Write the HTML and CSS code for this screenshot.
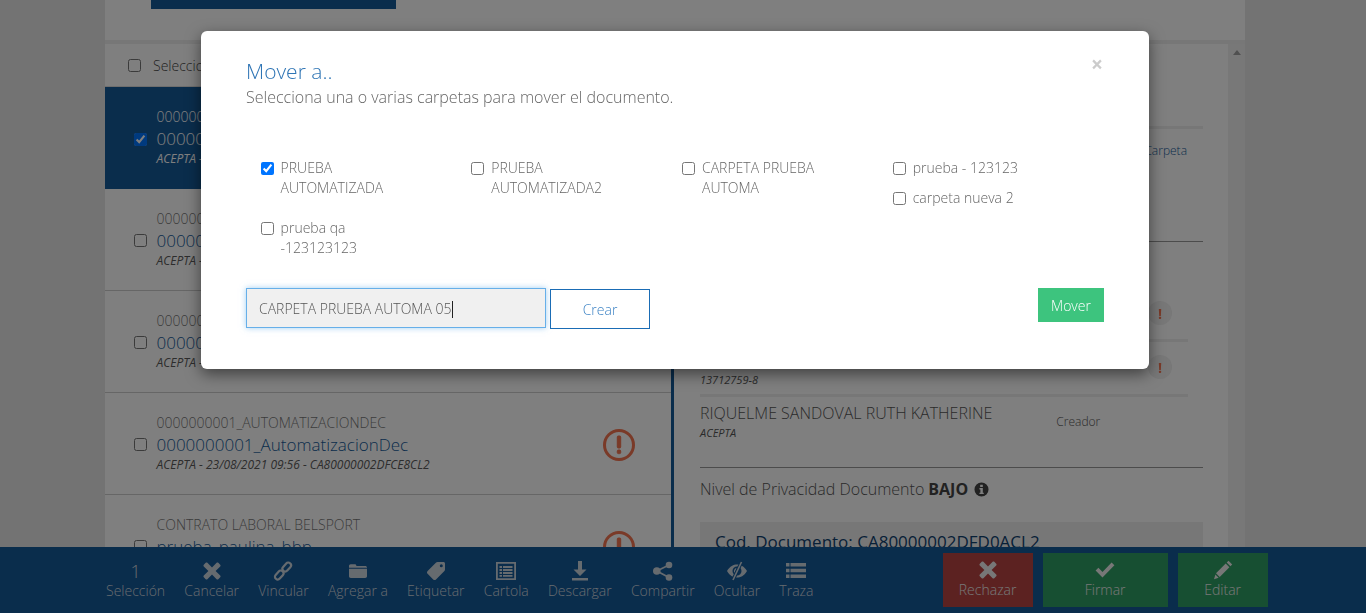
FILE: index.html
```html
<!DOCTYPE html>
<html lang="en">
<head>
    <meta charset="UTF-8">
    <meta name="viewport" content="width=device-width, initial-scale=1.0">
    <title>Mover a</title>
    <link rel="stylesheet" href="styles.css">
</head>
<body>
    <div class="page">
        <div class="wrap">
            <div class="top">
                <div class="top-btn"></div>
            </div>
            <div class="main">
                <div class="list">
                    <div class="list-head">
                        <input type="checkbox" class="cb">
                        <span>Seleccionar todos</span>
                    </div>
                    <div class="row selected">
                        <input type="checkbox" class="cb" checked>
                        <div class="row-text">
                            <div class="row-sup">0000000001_AUTOMATIZACIONDEC</div>
                            <div class="row-name">0000000001_AutomatizacionDec</div>
                            <div class="row-meta">ACEPTA - 23/08/2021 10:02 - CA80000002DFD0ACL2</div>
                        </div>
                    </div>
                    <div class="row">
                        <input type="checkbox" class="cb">
                        <div class="row-text">
                            <div class="row-sup">0000000001_AUTOMATIZACIONDEC</div>
                            <div class="row-name">0000000001_AutomatizacionDec</div>
                            <div class="row-meta">ACEPTA - 23/08/2021 10:00 - CA80000002DFCFCCL2</div>
                        </div>
                    </div>
                    <div class="row">
                        <input type="checkbox" class="cb">
                        <div class="row-text">
                            <div class="row-sup">0000000001_AUTOMATIZACIONDEC</div>
                            <div class="row-name">0000000001_AutomatizacionDec</div>
                            <div class="row-meta">ACEPTA - 23/08/2021 09:58 - CA80000002DFCF2CL2</div>
                        </div>
                    </div>
                    <div class="row">
                        <input type="checkbox" class="cb">
                        <div class="row-text">
                            <div class="row-sup">0000000001_AUTOMATIZACIONDEC</div>
                            <div class="row-name">0000000001_AutomatizacionDec</div>
                            <div class="row-meta">ACEPTA - 23/08/2021 09:56 - CA80000002DFCE8CL2</div>
                        </div>
                        <svg class="alert" viewBox="0 0 32 32"><circle cx="16" cy="16" r="14.5" fill="none" stroke-width="3"/><rect x="14.3" y="7" width="3.4" height="12" rx="1"/><rect x="14.3" y="21" width="3.4" height="3.6" rx="1"/></svg>
                    </div>
                    <div class="row">
                        <input type="checkbox" class="cb">
                        <div class="row-text">
                            <div class="row-sup">CONTRATO LABORAL BELSPORT</div>
                            <div class="row-name">prueba_paulina_bbp</div>
                            <div class="row-meta">ACEPTA - 23/08/2021 09:50 - CA80000002DFCD1CL2</div>
                        </div>
                        <svg class="alert" viewBox="0 0 32 32"><circle cx="16" cy="16" r="14.5" fill="none" stroke-width="3"/><rect x="14.3" y="7" width="3.4" height="12" rx="1"/><rect x="14.3" y="21" width="3.4" height="3.6" rx="1"/></svg>
                    </div>
                </div>
                <div class="detail">
                    <div class="detail-body">
                        <div class="block block-a"></div>
                        <div class="block block-b">
                            <a class="link-folder">Carpeta</a>
                        </div>
                        <div class="signers">
                            <div class="signer signer-a">
                                <div class="flag"><b>!</b></div>
                            </div>
                            <div class="signer signer-b">
                                <div class="signer-id">13712759-8</div>
                                <div class="flag"><b>!</b></div>
                            </div>
                            <div class="signer signer-c">
                                <div>
                                    <div class="signer-name">RIQUELME SANDOVAL RUTH KATHERINE</div>
                                    <div class="signer-id">ACEPTA</div>
                                </div>
                                <div class="signer-role">Creador</div>
                            </div>
                        </div>
                        <div class="privacy">
                            Nivel de Privacidad Documento <b>BAJO</b>
                            <svg class="info" viewBox="0 0 16 16"><path d="M8 .5a7.500 7.500 0 1 0 0 15 7.500 7.500 0 0 0 0-15zM6.600 3h2.800v2.200H6.600zM5.800 6.400h3.600v5h1v1.500H5.800v-1.500h1V7.900h-1z" fill-rule="evenodd"/></svg>
                        </div>
                        <div class="doc-code">Cod. Documento: CA80000002DFD0ACL2</div>
                    </div>
                    <div class="scroll"><i></i></div>
                </div>
            </div>
        </div>

        <div class="bar">
            <div class="bar-item"><span class="count">1</span>Selección</div>
            <div class="bar-item">
                <svg viewBox="0 0 20 20"><path d="M18.200 14.600 13.600 10l4.600-4.600c.5-.5.5-1.200 0-1.700L16.300 1.800c-.5-.5-1.200-.5-1.700 0L10 6.400 5.400 1.800c-.5-.5-1.200-.5-1.700 0L1.800 3.700c-.5.5-.5 1.200 0 1.700L6.400 10l-4.600 4.600c-.5.5-.5 1.200 0 1.700l1.900 1.900c.5.5 1.200.5 1.700 0l4.600-4.600 4.600 4.600c.5.5 1.200.5 1.700 0l1.900-1.900c.5-.5.5-1.200 0-1.700z"/></svg>
                Cancelar
            </div>
            <div class="bar-item">
                <svg viewBox="0 0 20 20"><g fill="none" stroke-width="2.200" class="line"><rect x="11" y="1" width="5.500" height="10" rx="2.700" transform="rotate(42 13.700 6)"/><rect x="3.500" y="9" width="5.500" height="10" rx="2.700" transform="rotate(42 6.200 14)"/></g></svg>
                Vincular
            </div>
            <div class="bar-item">
                <svg viewBox="0 0 20 20"><path d="M1 5c0-1 .7-1.700 1.700-1.700h4c1 0 1.300.5 1.600 1.200l.2.400h8.700c1 0 1.800.7 1.800 1.600v.3H1zM1 7.800h18v7.500c0 1-.8 1.700-1.800 1.700H2.800c-1 0-1.800-.7-1.800-1.700z"/></svg>
                Agregar a
            </div>
            <div class="bar-item">
                <svg viewBox="0 0 20 20"><path d="M11.500 1h6c.8 0 1.500.7 1.500 1.500v6c0 .6-.2 1-.6 1.400L10 18.400c-.8.800-2 .8-2.800 0L1.600 12.800c-.8-.8-.8-2 0-2.800L10.100 1.600c.4-.4.800-.6 1.400-.6zM15.300 3.300a1.500 1.500 0 1 0 0 3 1.500 1.500 0 0 0 0-3z" fill-rule="evenodd"/></svg>
                Etiquetar
            </div>
            <div class="bar-item">
                <svg viewBox="0 0 20 20"><path d="M0 1h20v18H0zM1.800 2.800v14.400h16.400V2.800zM3.500 5h2.500v2H3.500zM7 5h9.500v2H7zM3.500 8h2.500v2H3.500zM7 8h9.500v2H7zM3.500 11h2.500v2H3.500zM7 11h9.500v2H7zM3.500 14h2.500v1.800H3.500zM7 14h9.500v1.800H7z" fill-rule="evenodd"/></svg>
                Cartola
            </div>
            <div class="bar-item">
                <svg viewBox="0 0 20 20"><path d="M8 0h4v8.500h4.500L10 15 3.500 8.500H8zM2 17h16v2.500H2z"/></svg>
                Descargar
            </div>
            <div class="bar-item">
                <svg viewBox="0 0 20 20"><circle cx="16" cy="4" r="3.300"/><circle cx="16" cy="16.500" r="3.300"/><circle cx="3.800" cy="10" r="3.800"/><path d="M3.800 10 16 4M3.800 10 16 16.500" class="line" fill="none" stroke-width="1.800"/></svg>
                Compartir
            </div>
            <div class="bar-item">
                <svg viewBox="0 0 20 20"><path d="M0 10C3 5 6.500 3.500 10 3.500S17 5 20 10c-3 5-6.500 6.500-10 6.500S3 15 0 10zM10 5.500a4.500 4.500 0 1 0 0 9 4.500 4.500 0 0 0 0-9z" fill-rule="evenodd"/><path d="M9.700 7a3 3 0 0 0-2 5z"/><path d="M14.500 1 6 19" class="slash-gap" fill="none" stroke-width="3.600"/><path d="M14.500 1 6 19" class="line" fill="none" stroke-width="1.600"/></svg>
                Ocultar
            </div>
            <div class="bar-item">
                <svg viewBox="0 0 20 20"><path d="M0 2h3.500v3.500H0zM4.500 2H20v3.500H4.500zM0 7.800h3.500v3.500H0zM4.500 7.800H20v3.500H4.500zM0 13.600h3.500v3.500H0zM4.500 13.600H20v3.500H4.500z"/></svg>
                Traza
            </div>
            <div class="bar-actions">
                <div class="action action-red">
                    <svg viewBox="0 0 20 20"><path d="M18.200 14.600 13.600 10l4.600-4.600c.5-.5.5-1.200 0-1.700l-1.900-1.900c-.5-.5-1.200-.5-1.700 0L10 6.400 5.400 1.800c-.5-.5-1.200-.5-1.700 0L1.800 3.700c-.5.5-.5 1.200 0 1.700L6.400 10l-4.600 4.600c-.5.5-.5 1.200 0 1.700l1.900 1.900c.5.5 1.200.5 1.700 0l4.600-4.600 4.600 4.600c.5.5 1.200.5 1.700 0l1.900-1.900c.5-.5.5-1.200 0-1.700z"/></svg>
                    Rechazar
                </div>
                <div class="action action-sign">
                    <svg viewBox="0 0 20 20"><path d="M7.500 17.500 .6 10.600 3.400 7.800l4.100 4.100L16.600 2.500l2.800 2.800z"/></svg>
                    Firmar
                </div>
                <div class="action action-edit">
                    <svg viewBox="0 0 20 20"><path d="M15.500.8 19.200 4.500l-1.800 1.800-3.700-3.700zM12.700 3.600l3.700 3.700-9.700 9.700L3 13.300zM2.400 14.500l3.200 3.200L1 19.200z"/></svg>
                    Editar
                </div>
            </div>
        </div>
    </div>

    <div class="backdrop"></div>

    <div class="modal">
        <span class="close">×</span>
        <h4 class="modal-title">Mover a..</h4>
        <p class="modal-sub">Selecciona una o varias carpetas para mover el documento.</p>

        <div class="folders">
            <label class="folder"><input type="checkbox" class="cb" checked><span>PRUEBA AUTOMATIZADA</span></label>
            <label class="folder"><input type="checkbox" class="cb"><span>PRUEBA AUTOMATIZADA2</span></label>
            <label class="folder"><input type="checkbox" class="cb"><span>CARPETA PRUEBA AUTOMA</span></label>
            <div class="folder-stack">
                <label class="folder"><input type="checkbox" class="cb"><span>prueba - 123123</span></label>
                <label class="folder"><input type="checkbox" class="cb"><span>carpeta nueva 2</span></label>
            </div>
            <label class="folder"><input type="checkbox" class="cb"><span>prueba qa -123123123</span></label>
        </div>

        <div class="modal-foot">
            <div class="new-folder">CARPETA PRUEBA AUTOMA 05<i class="caret"></i></div>
            <button class="btn-create">Crear</button>
            <button class="btn-move">Mover</button>
        </div>
    </div>
</body>
</html>
```

FILE: styles.css
```css
* {
    box-sizing: border-box;
}
body {
    margin: 0;
    height: 100vh;
    overflow: hidden;
    background-color: #e6e6e6;
    font-family: "Open Sans", sans-serif;
    font-size: 14px;
    color: #555;
}
.page {
    height: 100vh;
    display: flex;
    flex-direction: column;
}
.wrap {
    flex: 1;
    min-height: 0;
    width: 1140px;
    margin-left: 105px;
    display: flex;
    flex-direction: column;
    background-color: #fff;
}
.top {
    height: 40px;
    flex-shrink: 0;
    padding-left: 46px;
}
.top-btn {
    width: 245px;
    height: 9px;
    background-color: #155a98;
}
.main {
    flex: 1;
    min-height: 0;
    display: flex;
    border-top: 4px solid #eee;
    background-color: #fff;
}

/* lista de documentos */
.list {
    width: 566px;
    flex-shrink: 0;
    overflow: hidden;
    background-color: #fff;
}
.list-head {
    height: 43px;
    display: flex;
    align-items: center;
    gap: 12px;
    padding-left: 23px;
    font-weight: 300;
    font-size: 14px;
    color: #444;
    border-bottom: 1px solid #ddd;
}
.cb {
    width: 13px;
    height: 13px;
    margin: 0;
    flex-shrink: 0;
}
.row {
    height: 102px;
    display: flex;
    align-items: center;
    padding-left: 29px;
    padding-right: 36px;
    border-bottom: 1px solid #ccc;
}
.row .cb {
    margin-top: 2px;
}
.row.selected {
    background-color: #155a98;
    color: #fff;
    border-bottom: 0;
}
.row-text {
    flex: 1;
    margin-left: 9.5px;
    font-weight: 300;
    margin-top: -2px;
    white-space: nowrap;
}
.row-sup {
    font-size: 14px;
    line-height: 20px;
    color: #777;
}
.row-name {
    font-size: 17px;
    line-height: 24px;
    color: #155a98;
}
.row-meta {
    font-size: 12px;
    line-height: 16px;
    font-style: italic;
    font-weight: 400;
    color: #5a5a5a;
}
.selected .row-sup,
.selected .row-name,
.selected .row-meta {
    color: #fff;
}
.alert {
    position: relative;
    z-index: 5;
    margin-top: 3px;
    width: 32px;
    height: 32px;
    stroke: #7a3a28;
    fill: #7a3a28;
}

/* detalle */
.detail {
    flex: 1;
    min-width: 0;
    display: flex;
    border-left: 3px solid #155a98;
    overflow: hidden;
}
.detail-body {
    flex: 1;
    min-width: 0;
    padding: 0 25px 0 26px;
    overflow: hidden;
}
.scroll {
    width: 17px;
    flex-shrink: 0;
    background-color: #f1f1f1;
}
.scroll i {
    display: block;
    width: 0;
    margin: 6px auto 0;
    border-left: 4px solid transparent;
    border-right: 4px solid transparent;
    border-bottom: 5px solid #a0a0a0;
}
.block-a {
    height: 85px;
    border-bottom: 3px solid #eee;
}
.block-b {
    height: 113px;
    border-bottom: 1px solid #999;
    padding-top: 11px;
    text-align: right;
    padding-right: 16px;
}
.link-folder {
    font-size: 12px;
    font-weight: 300;
    color: #155a98;
}
.signers {
    height: 225px;
}
.signer {
    display: flex;
    align-items: center;
    margin-right: 15px;
}
.signer-a {
    height: 100px;
    justify-content: flex-end;
    padding-top: 45px;
    border-bottom: 3px solid #eee;
}
.signer-b {
    height: 55px;
    justify-content: space-between;
    align-items: flex-end;
    padding-bottom: 6px;
    border-bottom: 3px solid #eee;
}
.signer-c {
    padding-top: 5px;
}
.flag {
    width: 24px;
    height: 24px;
    margin-right: 16px;
    border-radius: 50%;
    display: flex;
    align-items: center;
    justify-content: center;
    position: relative;
    z-index: 5;
    background-color: #787878;
    color: #7a3a28;
    font-size: 14px;
}
.signer-b .flag {
    margin-bottom: 9px;
}
.signer-name {
    font-size: 16px;
    font-weight: 300;
    line-height: 23px;
    color: #555;
}
.signer-id {
    font-size: 11px;
    font-style: italic;
    line-height: 16px;
    color: #555;
}
.signer-role {
    margin-left: 64px;
    font-size: 12px;
    font-weight: 300;
    color: #555;
}
.privacy {
    height: 55px;
    padding-bottom: 12px;
    border-top: 1px solid #999;
    display: flex;
    align-items: center;
    gap: 4px;
    font-size: 16px;
    font-weight: 300;
    color: #555;
}
.privacy b {
    font-weight: 700;
    font-size: 16px;
    color: #444;
}
.info {
    width: 15px;
    height: 15px;
    margin-left: 2px;
    fill: #444;
}
.doc-code {
    background-color: #eee;
    padding: 8px 15px;
    font-size: 17px;
    color: #0f4170;
    white-space: nowrap;
}

/* barra inferior */
.bar {
    height: 66px;
    flex-shrink: 0;
    display: flex;
    align-items: center;
    gap: 19.2px;
    padding-left: 106px;
    background-color: #155a98;
    color: #cdd6df;
    font-size: 14px;
    font-weight: 300;
}
.bar-item,
.action {
    display: flex;
    flex-direction: column;
    align-items: center;
    line-height: 19px;
    white-space: nowrap;
}
.bar-item svg,
.action svg {
    width: 20px;
    height: 20px;
    fill: currentColor;
}
.bar-item .line {
    stroke: currentColor;
}
.bar-item .slash-gap {
    stroke: #155a98;
}
.count {
    height: 20px;
    font-size: 18px;
    line-height: 20px;
}
.bar-actions {
    margin-left: 110px;
    display: flex;
    gap: 10px;
}
.action {
    height: 54px;
    padding-top: 7px;
    color: #eee;
}
.action-red {
    width: 90px;
    background-color: #b84442;
}
.action-sign {
    width: 125px;
    background-color: #2f9e65;
}
.action-edit {
    width: 90px;
    background-color: #2f9e65;
}

/* modal */
.backdrop {
    position: fixed;
    inset: 0;
    background-color: rgba(0, 0, 0, 0.5);
    z-index: 2;
}
.modal {
    position: fixed;
    z-index: 10;
    left: 201px;
    top: 31px;
    width: 948px;
    height: 338px;
    padding: 27px 45px 0;
    background-color: #fff;
    border-radius: 6px;
    box-shadow: 0 5px 15px rgba(0, 0, 0, 0.5);
}
.close {
    position: absolute;
    right: 46px;
    top: 20px;
    font-size: 21px;
    line-height: 26px;
    font-weight: 700;
    color: #ccc;
}
.modal-title {
    margin: 0 0 1px;
    font-size: 21px;
    line-height: 26px;
    font-weight: 300;
    color: #2f75b5;
}
.modal-sub {
    margin: 0;
    font-size: 16px;
    line-height: 24px;
    font-weight: 300;
    color: #666;
}
.folders {
    display: grid;
    grid-template-columns: repeat(4, 210.7px);
    margin-top: 49px;
    padding-left: 14.6px;
}
.folder {
    display: flex;
    gap: 7px;
    margin-bottom: 10px;
    padding-right: 60px;
    font-size: 14px;
    font-weight: 300;
    line-height: 20px;
    color: #666;
    align-items: flex-start;
}
.folder .cb {
    margin-top: 4px;
}
.folder-stack .folder {
    padding-right: 0;
}
.modal-foot {
    display: flex;
    align-items: flex-start;
    gap: 4px;
    margin-top: 20px;
}
.new-folder {
    width: 300px;
    height: 40px;
    line-height: 39px;
    padding-left: 12px;
    background-color: #f0f0f0;
    border: 1px solid #66afe9;
    box-shadow: 0 0 6px rgba(102, 175, 233, 0.6);
    font-size: 14px;
    font-weight: 300;
    color: #555;
}
.caret {
    display: inline-block;
    width: 1px;
    height: 17px;
    vertical-align: -4px;
    background-color: #222;
}
.btn-create {
    width: 100px;
    height: 40px;
    margin-top: 1px;
    border: 1px solid #1a6cb5;
    background-color: #fff;
    color: #3b82c4;
    font-family: inherit;
    font-size: 14px;
    font-weight: 300;
}
.btn-move {
    margin-left: auto;
    width: 66px;
    height: 34px;
    border: none;
    background-color: #3dc47e;
    color: #fff;
    font-family: inherit;
    font-size: 14px;
    font-weight: 300;
}
```
